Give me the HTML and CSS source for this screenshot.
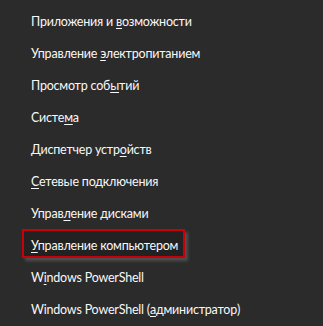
FILE: index.html
```html
<!DOCTYPE html>
<html lang="ru">
<head>
<meta charset="utf-8">
<link rel="stylesheet" href="styles.css">
</head>
<body>
<ul class="menu">
  <li class="item">Приложения и <u>в</u>озможности</li>
  <li class="item">Управление <u>э</u>лектропитанием</li>
  <li class="item">Просмотр соб<u>ы</u>тий</li>
  <li class="item">Систе<u>м</u>а</li>
  <li class="item">Диспетчер устр<u>о</u>йств</li>
  <li class="item"><u>С</u>етевые подключения</li>
  <li class="item">Управ<u>л</u>ение дисками</li>
  <li class="item item--marked"><u>У</u>правление компьютером</li>
  <li class="item">W<u>i</u>ndows PowerShell</li>
  <li class="item">Windows PowerShell (<u>а</u>дминистратор)</li>
</ul>
</body>
</html>
```
FILE: styles.css
```css
html, body {
  margin: 0;
  padding: 0;
  background: #2b2b2b;
}
body {
  width: 323px;
  height: 326px;
  overflow: hidden;
  font-family: Lato, "Noto Sans", sans-serif;
  font-size: 12.5px;
  letter-spacing: -0.2px;
  color: #f8f8f8;
}
.menu {
  list-style: none;
  margin: 0;
  padding: 6px 0 0 0;
}
.item {
  position: relative;
  height: 32px;
  line-height: 32px;
  padding-left: 31px;
  white-space: nowrap;
}
.item u {
  text-decoration: underline;
  text-decoration-thickness: 1px;
  text-underline-offset: 2px;
}
.item--marked {
  z-index: 0;
}
.item--marked::before {
  content: "";
  position: absolute;
  left: 22px;
  top: -1px;
  width: 159px;
  height: 25px;
  border: 2px solid #c8000a;
  background: #222222;
  box-shadow: 3px 3px 3px rgba(110, 110, 110, 0.55);
  z-index: -1;
}
```
